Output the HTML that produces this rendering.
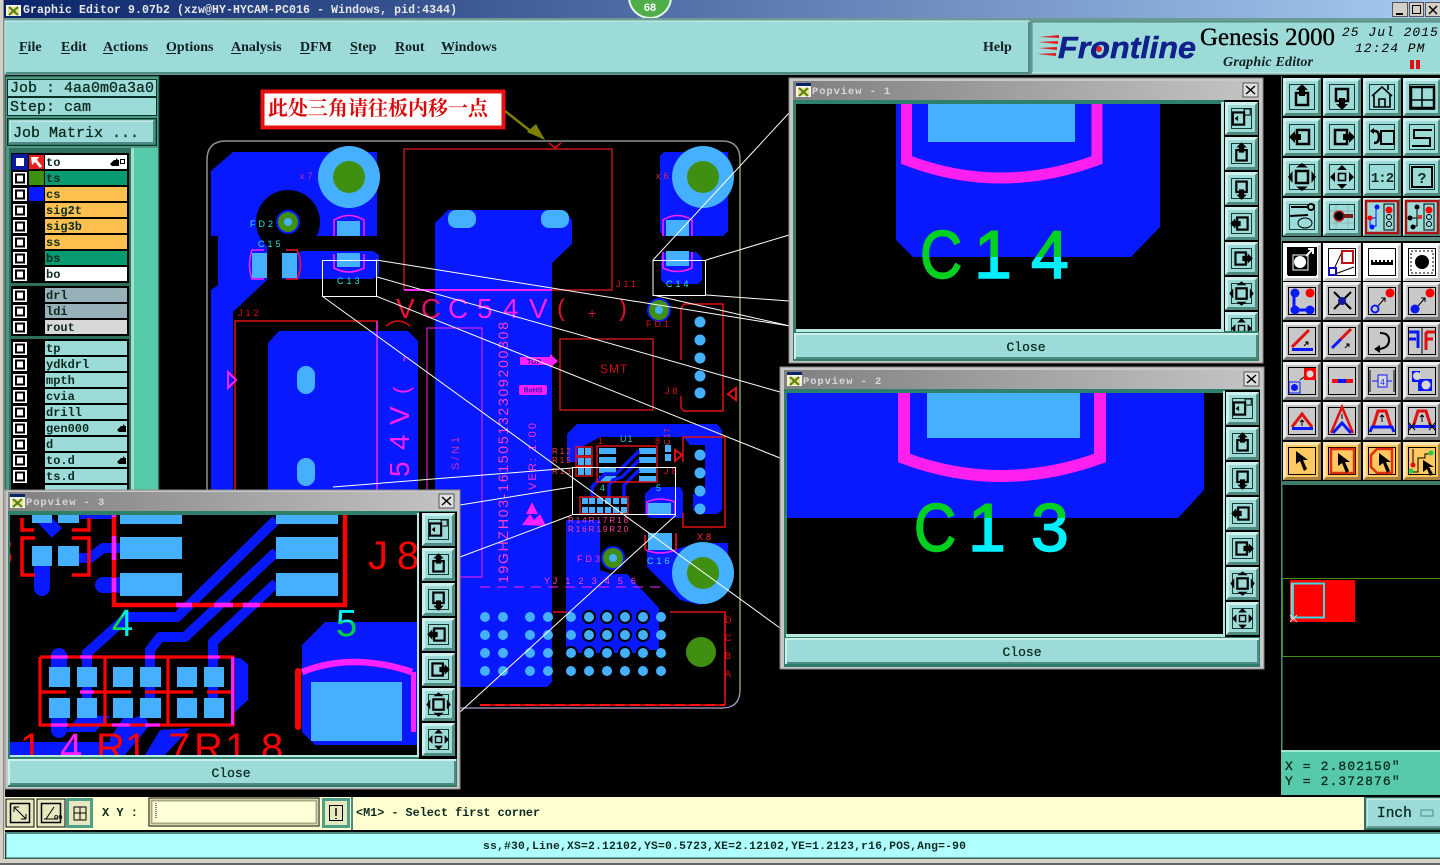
<!DOCTYPE html>
<html><head><meta charset="utf-8"><title>Graphic Editor</title>
<style>
html,body{margin:0;padding:0;background:#000;overflow:hidden}
svg{display:block}
text{white-space:pre}
.m{font-family:"Liberation Mono",monospace;font-weight:bold}
.mr{font-family:"Liberation Mono",monospace;font-weight:normal;fill:#0a2a20;stroke:#0a2a20;stroke-width:.3px}
.s{font-family:"Liberation Sans",sans-serif}
.sf{font-family:"Liberation Serif",serif}
.mn{font-family:"Liberation Serif",serif;font-weight:bold;font-size:14px;fill:#102020}
.ly{font-family:"Liberation Mono",monospace;font-weight:bold;font-size:12px;fill:#0a2a20}
</style></head><body>
<svg xmlns="http://www.w3.org/2000/svg" width="1440" height="865" viewBox="0 0 1440 865">
<defs>
<linearGradient id="tg" x1="0" x2="1"><stop offset="0" stop-color="#0a246a"/><stop offset="1" stop-color="#a6caf0"/></linearGradient>
<linearGradient id="pg" x1="0" x2="1"><stop offset="0" stop-color="#808080"/><stop offset="1" stop-color="#c4c4c4"/></linearGradient>
<linearGradient id="c14" gradientUnits="userSpaceOnUse" x1="0" x2="0" y1="225" y2="285"><stop offset=".533" stop-color="#00d020"/><stop offset=".533" stop-color="#00f0ff"/></linearGradient>
<linearGradient id="c13" gradientUnits="userSpaceOnUse" x1="0" x2="0" y1="498" y2="558"><stop offset=".333" stop-color="#00d020"/><stop offset=".333" stop-color="#00f0ff"/></linearGradient>
<linearGradient id="c5" gradientUnits="userSpaceOnUse" x1="0" x2="0" y1="600" y2="640"><stop offset=".55" stop-color="#00f0ff"/><stop offset=".55" stop-color="#00d040"/></linearGradient>
<linearGradient id="c4" x1="0" x2="1" y1="0" y2="0"><stop offset=".45" stop-color="#00e040"/><stop offset=".5" stop-color="#00f0e0"/></linearGradient>
<clipPath id="cp1"><rect x="796" y="104" width="425" height="225"/></clipPath>
<clipPath id="cp2"><rect x="787" y="393" width="436" height="241"/></clipPath>
<clipPath id="cp3"><rect x="10" y="515" width="407" height="240"/></clipPath>
<clipPath id="cb1"><rect x="1224" y="100" width="36" height="231"/></clipPath>

<g id="tb"><rect width="38" height="38" fill="#9ddbd9"/><path d="M0 0H38L35 3H3V35L0 38Z" fill="#cdf0ec"/><path d="M38 38H0L3 35H35V3L38 0Z" fill="#4f8a80"/><rect x="6.5" y="6.5" width="25" height="25" fill="none" stroke="#1a3a34"/></g>
<g id="wb"><rect width="38" height="38" fill="#fff"/><path d="M38 38H0L3 35H35V3L38 0Z" fill="#c8c8c8"/><rect x="5.5" y="5.5" width="27" height="27" fill="none" stroke="#000"/></g>
<g id="gb"><rect width="38" height="38" fill="#c8c8c8"/><path d="M0 0H38L35 3H3V35L0 38Z" fill="#eee"/><path d="M38 38H0L3 35H35V3L38 0Z" fill="#777"/><rect x="5.5" y="5.5" width="27" height="27" fill="none" stroke="#000"/></g>
<g id="yb"><rect width="38" height="38" fill="#ffc860"/><path d="M0 0H38L35 3H3V35L0 38Z" fill="#ffe6b0"/><path d="M38 38H0L3 35H35V3L38 0Z" fill="#a88240"/><rect x="5.5" y="5.5" width="27" height="27" fill="none" stroke="#000"/></g>
<g id="sb"><rect width="33" height="33" fill="#9ddbd9"/><path d="M0 0H33L30 3H3V30L0 33Z" fill="#cdf0ec"/><path d="M33 33H0L3 30H30V3L33 0Z" fill="#4f8a80"/><rect x="6.5" y="6.5" width="20" height="20" fill="none" stroke="#1a3a34"/></g>

<g id="iu"><rect x="13" y="15" width="12" height="12" fill="none" stroke="#000" stroke-width="2.5"/><path d="M19 6 25 12H22V18H16V12H13Z"/></g>
<g id="id"><rect x="13" y="11" width="12" height="12" fill="none" stroke="#000" stroke-width="2.5"/><path d="M19 32 25 26H22V20H16V26H13Z"/></g>
<g id="il"><rect x="14" y="12" width="12" height="14" fill="none" stroke="#000" stroke-width="2.5"/><path d="M6 19 12 13V16H18V22H12V25Z"/></g>
<g id="ir"><rect x="12" y="12" width="12" height="14" fill="none" stroke="#000" stroke-width="2.5"/><path d="M32 19 26 13V16H20V22H26V25Z"/></g>
<g id="if"><rect x="13" y="13" width="12" height="12" fill="none" stroke="#000" stroke-width="2.5"/><path d="M19 5 25 9.5H13ZM19 33 25 28.5H13ZM5 19 9.5 13V25ZM33 19 28.5 13V25Z"/></g>
<g id="ip"><rect x="15.5" y="15.5" width="7" height="7" fill="none" stroke="#000" stroke-width="1.6"/><path d="M19 7 24 12H14ZM19 31 24 26H14ZM7 19 12 14V24ZM31 19 26 14V24Z"/></g>
<g id="iz"><rect x="9" y="12" width="13" height="14" fill="none" stroke="#000" stroke-width="2.5"/><rect x="22" y="8" width="7" height="7" fill="none" stroke="#000" stroke-width="1.2"/><path d="M11 19 15 16V22Z"/></g>

<g id="cb"><rect width="14" height="13" fill="#fff"/><rect x="3" y="2.5" width="8" height="8" fill="#fff" stroke="#000" stroke-width="2"/></g>
<g id="ti"><rect width="15" height="14" fill="#f4f4e8"/><rect width="15" height="3" fill="#0a246a"/><rect x="2" y="5" width="11" height="8" fill="#f0e080"/><path d="M3 5 12 13M12 5 3 13" stroke="#508020" stroke-width="2"/></g>
<g id="hand"><path d="M0 6 4 2H6V0L8 2H9V8H2Z"/></g>
</defs>

<!-- base -->
<rect width="1440" height="865" fill="#000"/>
<rect x="0" width="5" height="865" fill="#d4d0c8"/>
<rect x="3" width="1" height="865" fill="#888"/>

<!-- title bar -->
<rect x="4" y="0" width="1436" height="18" fill="url(#tg)"/>
<use href="#ti" x="6" y="2"/>
<text class="m" x="23" y="13" font-size="11.5" fill="#e8e8e8" textLength="434">Graphic Editor 9.07b2 (xzw@HY-HYCAM-PC016 - Windows, pid:4344)</text>
<circle cx="650" cy="-3" r="21" fill="#4fae4a" stroke="#e8f4e8" stroke-width="2"/>
<text class="s" x="650" y="11" font-size="11" font-weight="bold" fill="#fff" text-anchor="middle">68</text>
<g fill="#d4d0c8" stroke="#555">
<rect x="1392.5" y="2.5" width="15" height="14"/><rect x="1409.5" y="2.5" width="14" height="14"/><rect x="1425.5" y="2.5" width="15" height="14"/></g>
<path d="M1396 13h7v2h-7z"/><rect x="1412.5" y="5.5" width="8" height="8" fill="none" stroke="#000"/><path d="M1429 6 1437 14M1437 6 1429 14" stroke="#000" stroke-width="1.5"/>

<!-- menu bar -->
<rect x="4" y="18" width="1436" height="57" fill="#6a9a92"/>
<rect x="5" y="21" width="1024" height="52" fill="#9ddbd9" stroke="#cdf0ec" stroke-width="1"/>
<path d="M6 73H1029V22" fill="none" stroke="#4f8a80" stroke-width="2"/>
<g>
<text class="mn" x="19" y="51">File</text><text class="mn" x="61" y="51">Edit</text><text class="mn" x="103" y="51">Actions</text><text class="mn" x="166" y="51">Options</text><text class="mn" x="231" y="51">Analysis</text><text class="mn" x="300" y="51">DFM</text><text class="mn" x="350" y="51">Step</text><text class="mn" x="395" y="51">Rout</text><text class="mn" x="441" y="51">Windows</text><text class="mn" x="983" y="51">Help</text>
</g>
<g fill="#102020"><rect x="19" y="53" width="9" height="1"/><rect x="61" y="53" width="9" height="1"/><rect x="103" y="53" width="10" height="1"/><rect x="166" y="53" width="10" height="1"/><rect x="231" y="53" width="10" height="1"/><rect x="300" y="53" width="10" height="1"/><rect x="350" y="53" width="8" height="1"/><rect x="395" y="53" width="9" height="1"/><rect x="441" y="53" width="13" height="1"/></g>

<!-- logo panel -->
<rect x="1032" y="22" width="408" height="51" fill="#9ddbd9"/>
<path d="M1032 73V22H1440" fill="none" stroke="#4f8a80"/><path d="M1032 73H1440" stroke="#cdf0ec"/>
<g fill="#e02020"><path d="M1039 37 1059 35V38ZM1038 42 1058 41V44ZM1038 48 1057 47V50ZM1037 54 1056 53V56Z"/></g>
<text class="s" x="1058" y="58" font-size="31" font-weight="bold" font-style="italic" fill="#10208c" stroke="#10208c" stroke-width=".5" textLength="138" lengthAdjust="spacingAndGlyphs">Frontline</text>
<circle cx="1099" cy="49" r="3" fill="#e02020"/>
<text class="sf" x="1200" y="45" font-size="25" fill="#000" stroke="#000" stroke-width=".35" textLength="135" lengthAdjust="spacingAndGlyphs">Genesis 2000</text>
<text class="sf" x="1223" y="66" font-size="14" font-weight="bold" font-style="italic" fill="#102020" textLength="90">Graphic Editor</text>
<text x="1342" y="36" font-family="Liberation Mono" font-style="italic" font-size="13" fill="#000" letter-spacing="1">25 Jul 2015</text>
<text x="1355" y="52" font-family="Liberation Mono" font-style="italic" font-size="13" fill="#000" letter-spacing="1">12:24 PM</text>
<rect x="1410" y="60" width="4" height="9" fill="#e01010"/><rect x="1416" y="60" width="4" height="9" fill="#e01010"/>

<!-- ================ PCB ================ -->
<g>
<!-- blue copper -->
<g fill="#0818ff">
<path d="M211 171 233 152H377V236H211Z"/>
<path d="M218 232H267V280L233 312V600H211V290L218 285Z"/>
<rect x="211" y="171" width="7" height="51"/>
<path d="M282 251H373L379 255V275L373 279H282Z"/>
<path d="M268 343 279 331H408L418 341V500H268Z"/>
<path d="M435 223 448 210H563L572 220V244L552 263V682L547 687H435Z"/>
<path d="M660 156 664 152H728V231L723 236H664L660 232Z"/>
<path d="M661 256 665 252H696L702 258V280L698 284H665L661 280Z"/>
<path d="M567 434 577 424H717L722 430V510L717 514H700L693 510V494H705V445H690L683 437H600L582 447V462H567Z"/>
<path d="M566 520H600V570L612 574H627L659 608V650H650L640 653H566Z"/>
<path d="M645 494 652 487H680L683 492V518H650L645 514Z"/>
<path d="M647 550 672 550 700 543H728L728 580 700 605 680 600 647 567Z"/>
</g>
<!-- cutouts -->
<circle cx="288" cy="222" r="32" fill="#000"/>
<rect x="320" y="236" width="60" height="15" fill="#000"/>
<rect x="282" y="240" width="40" height="11" fill="#000"/>
<rect x="267" y="250" width="15" height="34" fill="#000"/>
<!-- circles -->
<circle cx="349" cy="177" r="31" fill="#44b0ff"/><circle cx="349" cy="177" r="16" fill="#3f9010"/>
<circle cx="703" cy="177" r="31" fill="#44b0ff"/><circle cx="703" cy="177" r="16" fill="#3f9010"/>
<circle cx="703" cy="573" r="31" fill="#44b0ff"/><circle cx="703" cy="573" r="16" fill="#3f9010"/>
<circle cx="701" cy="652" r="15" fill="#3f9010"/>
<g><circle cx="288" cy="222" r="12" fill="#0818ff"/><circle cx="288" cy="222" r="10" fill="#3f9010"/><circle cx="288" cy="222" r="4" fill="#44b0ff"/>
<circle cx="659" cy="310" r="12" fill="#0818ff"/><circle cx="659" cy="310" r="10" fill="#3f9010"/><circle cx="659" cy="310" r="4" fill="#44b0ff"/>
<circle cx="613" cy="558" r="12" fill="#0818ff"/><circle cx="613" cy="558" r="10" fill="#3f9010"/><circle cx="613" cy="558" r="4" fill="#44b0ff"/></g>
<!-- light pads -->
<g fill="#44b0ff">
<rect x="448" y="210" width="28" height="18" rx="8"/><rect x="541" y="210" width="28" height="18" rx="8"/>
<rect x="297" y="366" width="18" height="28" rx="9"/><rect x="297" y="458" width="18" height="28" rx="9"/>
<rect x="337" y="221" width="23" height="15"/><rect x="337" y="253" width="23" height="14"/>
<rect x="252" y="253" width="15" height="25"/><rect x="282" y="253" width="15" height="25"/>
<rect x="666" y="220" width="23" height="16"/><rect x="666" y="251" width="23" height="15"/>
<rect x="648" y="503" width="23" height="12"/><rect x="648" y="533" width="24" height="17"/>
</g>
<!-- pad grid -->
<g fill="#000"><circle cx="589" cy="617" r="7"/><circle cx="607" cy="617" r="7"/><circle cx="625" cy="617" r="7"/><circle cx="643" cy="617" r="7"/><circle cx="589" cy="635" r="7"/><circle cx="607" cy="635" r="7"/><circle cx="625" cy="635" r="7"/><circle cx="643" cy="635" r="7"/><circle cx="571" cy="653" r="7"/><circle cx="589" cy="653" r="7"/><circle cx="607" cy="653" r="7"/><circle cx="625" cy="653" r="7"/><circle cx="643" cy="653" r="7"/></g>
<g fill="#44b0ff">
<circle cx="485" cy="617" r="5"/><circle cx="503" cy="617" r="5"/><circle cx="530" cy="617" r="5"/><circle cx="548" cy="617" r="5"/><circle cx="571" cy="617" r="5"/><circle cx="589" cy="617" r="5"/><circle cx="607" cy="617" r="5"/><circle cx="625" cy="617" r="5"/><circle cx="643" cy="617" r="5"/><circle cx="661" cy="617" r="5"/>
<circle cx="485" cy="635" r="5"/><circle cx="503" cy="635" r="5"/><circle cx="530" cy="635" r="5"/><circle cx="548" cy="635" r="5"/><circle cx="571" cy="635" r="5"/><circle cx="589" cy="635" r="5"/><circle cx="607" cy="635" r="5"/><circle cx="625" cy="635" r="5"/><circle cx="643" cy="635" r="5"/><circle cx="661" cy="635" r="5"/>
<circle cx="485" cy="653" r="5"/><circle cx="503" cy="653" r="5"/><circle cx="530" cy="653" r="5"/><circle cx="548" cy="653" r="5"/><circle cx="571" cy="653" r="5"/><circle cx="589" cy="653" r="5"/><circle cx="607" cy="653" r="5"/><circle cx="625" cy="653" r="5"/><circle cx="643" cy="653" r="5"/><circle cx="661" cy="653" r="5"/>
<circle cx="485" cy="671" r="5"/><circle cx="503" cy="671" r="5"/><circle cx="530" cy="671" r="5"/><circle cx="548" cy="671" r="5"/><circle cx="571" cy="671" r="5"/><circle cx="589" cy="671" r="5"/><circle cx="607" cy="671" r="5"/><circle cx="625" cy="671" r="5"/><circle cx="643" cy="671" r="5"/><circle cx="661" cy="671" r="5"/>
<circle cx="700" cy="322" r="5.5"/><circle cx="700" cy="340" r="5.5"/><circle cx="700" cy="358" r="5.5"/><circle cx="700" cy="376" r="5.5"/><circle cx="700" cy="393" r="5.5"/>
<circle cx="700" cy="455" r="5.5"/><circle cx="700" cy="473" r="5.5"/><circle cx="700" cy="491" r="5.5"/><circle cx="700" cy="509" r="5.5"/>
<!-- U1 pads -->
<rect x="599" y="448" width="17" height="6"/><rect x="599" y="457" width="17" height="6"/><rect x="599" y="467" width="17" height="6"/><rect x="599" y="476" width="17" height="6"/>
<rect x="639" y="448" width="17" height="6"/><rect x="639" y="457" width="17" height="6"/><rect x="639" y="467" width="17" height="6"/><rect x="639" y="476" width="17" height="6"/>
<rect x="578" y="448" width="6" height="7"/><rect x="585" y="448" width="6" height="7"/><rect x="578" y="458" width="6" height="7"/><rect x="585" y="458" width="6" height="7"/><rect x="578" y="468" width="6" height="7"/><rect x="585" y="468" width="6" height="7"/>
<rect x="582" y="498" width="6" height="6"/><rect x="589" y="498" width="6" height="6"/><rect x="597" y="498" width="6" height="6"/><rect x="605" y="498" width="6" height="6"/><rect x="613" y="498" width="6" height="6"/><rect x="621" y="498" width="6" height="6"/>
<rect x="582" y="507" width="6" height="6"/><rect x="589" y="507" width="6" height="6"/><rect x="597" y="507" width="6" height="6"/><rect x="605" y="507" width="6" height="6"/><rect x="613" y="507" width="6" height="6"/><rect x="621" y="507" width="6" height="6"/>
<rect x="665" y="445" width="6" height="7"/><rect x="665" y="454" width="6" height="7"/>
</g>
<!-- traces under U1 -->
<g fill="none" stroke="#0818ff" stroke-width="3.5"><path d="M639 451 616 474 605 474 592 487V498M639 460 622 477 613 480 609 485V498M639 470 624 485V498"/></g>
<!-- outlines red -->
<g fill="none" stroke="#e01010" stroke-width="1.5">
<path d="M404 290V149H612V290H552" stroke="#c01818"/>
<rect x="560" y="339" width="93" height="71" stroke="#c01818"/>
<path d="M235 490V321H377V330"/>
<path d="M681 360V308L684 304H723V411H684L681 408V396"/>
<path d="M683 462V437H725V527H683V513"/>
<rect x="597" y="446" width="60" height="36"/>
<rect x="576" y="447" width="16" height="9"/><rect x="576" y="457" width="16" height="9"/><rect x="576" y="467" width="16" height="9"/>
<rect x="580" y="497" width="48" height="17"/>
<path d="M553 612H567M670 612H725V705H480" />
</g>
<path d="M480 705H725" stroke="#ff1010" stroke-width="2" stroke-dasharray="10 5" fill="none"/>
<path d="M725 612V698" stroke="#e01010" stroke-width="1.5"/>
<path d="M404 290H552" stroke="#ff20ff" stroke-width="2"/>
<path d="M377 321V490" stroke="#ff20ff" stroke-width="1.5"/>
<rect x="427" y="328" width="55" height="249" fill="none" stroke="#ff20ff" stroke-width="1"/>
<path d="M480 587H660" stroke="#ff20ff" stroke-dasharray="10 7" stroke-width="1"/>
<!-- magenta arcs -->
<g fill="none" stroke="#ff20ff" stroke-width="1.6">
<path d="M334 236V220Q349 211 364 220V236"/><path d="M334 254V268Q349 276 364 268V254"/>
<path d="M663 236V220Q677 211 692 220V236"/><path d="M663 252V268Q677 275 692 268V252"/>
<path d="M264 250H252Q247 265 252 279H264" />
<path d="M647 515V502Q660 496 675 502V515"/><path d="M646 550Q660 556 675 550"/>
</g>
<g fill="none" stroke="#f01030" stroke-width="1.6"><path d="M286 250H297Q304 265 297 279H286"/><path d="M645 535V550M676 533V550"/></g>
<!-- small triangles etc -->
<path d="M228 372 236 380 228 388Z" fill="none" stroke="#ff20ff" stroke-width="2"/>
<path d="M736 388 728 394 736 400Z" fill="none" stroke="#e01010" stroke-width="2"/>
<path d="M675 450 682 455 675 461Z" fill="none" stroke="#e01010" stroke-width="2"/>
<path d="M549 143 555 148 561 143" stroke="#e01010" stroke-width="1.5" fill="none"/>
<path d="M386 326Q398 316 410 326" fill="none" stroke="#e01010" stroke-width="1.5"/>
<path d="M520 361H550V354L558 361 550 368V361Z" fill="#ff20ff"/><rect x="520" y="357" width="30" height="8" fill="#ff20ff"/>
<rect x="519" y="385" width="28" height="10" rx="2" fill="#ff20ff"/>
<text class="s" x="533" y="392.5" font-size="7" text-anchor="middle" fill="#3010b0" font-weight="bold">RoHS</text>
<text class="s" x="527" y="364" font-size="7" fill="#3010b0" font-weight="bold">TOP</text>
<path d="M532 502 538 514H526ZM522 525 530 514 534 520 540 514 546 526Z" fill="#ff20ff"/>
<!-- silk text -->
<g class="s" font-size="28">
<text x="396" y="318" fill="#e81030">V</text>
<text x="421" y="318" fill="#e01070">C</text>
<text x="448" y="318" fill="#ff20ff">C</text>
<text x="477" y="318" fill="#ff20ff">5</text>
<text x="503" y="318" fill="#ff20ff">4</text>
<text x="529" y="318" fill="#ff20ff">V</text>
<text x="557" y="316" fill="#e01030" font-size="24">(</text>
<text x="588" y="318" fill="#e01030" font-size="14">+</text>
<text x="619" y="316" fill="#e01030" font-size="24">)</text>
</g>
<g class="s" font-size="28" fill="#ff20ff">
<text transform="translate(409,477) rotate(-90)">5</text>
<text transform="translate(409,450) rotate(-90)">4</text>
<text transform="translate(409,425) rotate(-90)">V</text>
<text transform="translate(409,394) rotate(-90)" font-size="22">(</text>
<text transform="translate(409,362) rotate(-90)" font-size="18">-</text>
</g>
<text class="s" transform="translate(508,583) rotate(-90)" font-size="14" fill="#ff40d0" textLength="261">19GHZH03-161505132309200308</text>
<text class="s" transform="translate(536,490) rotate(-90)" font-size="11" fill="#ff30e0" textLength="67">VER: 1.00</text>
<text class="s" transform="translate(459,470) rotate(-90)" font-size="11" fill="#c030c0" textLength="33">S/N1</text>
<g class="s" font-size="9" letter-spacing="3">
<text x="250" y="227" fill="#30e0e0">FD2</text><text x="258" y="247" fill="#30e0e0">C15</text>
<text x="337" y="284" fill="#30e0e0">C13</text><text x="666" y="287" fill="#30e0e0">C14</text>
<text x="300" y="179" fill="#c030c0">x7</text><text x="656" y="179" fill="#d03050">x6</text>
<text x="238" y="316" fill="#e01010">J12</text><text x="616" y="287" fill="#e01010">J11</text>
<text x="577" y="562" fill="#ff30e0">FD3</text><text x="646" y="327" fill="#e01010">FD1</text>
<text x="647" y="564" fill="#30e0e0">C16</text><text x="697" y="540" fill="#ff3030">X8</text>
<text x="665" y="394" fill="#e01010">J8</text><text x="664" y="474" fill="#e01010">J8</text>
<text x="600" y="373" fill="#d01010" font-size="12" letter-spacing="1">SMT</text>
<text x="620" y="442" fill="#30c0e0" letter-spacing="1">U1</text><text x="598" y="444" fill="#e01010">1</text><text x="655" y="444" fill="#e01010">8</text>
<text x="600" y="491" fill="#30e0a0">4</text><text x="656" y="491" fill="#30e0e0">5</text>
<text x="552" y="454" fill="#ff4040" font-size="8" letter-spacing="2">R12</text><text x="552" y="463" fill="#ff4040" font-size="8" letter-spacing="2">R15</text><text x="552" y="474" fill="#ff4040" font-size="8" letter-spacing="2">R13</text>
<text x="568" y="523" fill="#ff40a0" font-size="8" letter-spacing="2">R14R17R18</text><text x="568" y="532" fill="#ff40a0" font-size="8" letter-spacing="2">R16R19R20</text>
<text x="544" y="584" fill="#ff40d0" letter-spacing="2.8">YJ 1 2 3 4 5 6</text>
<text x="725" y="623" fill="#e01010" font-size="9">D</text><text x="725" y="641" fill="#e01010" font-size="9">C</text><text x="725" y="659" fill="#e01010" font-size="9">B</text><text x="725" y="677" fill="#e01010" font-size="9">A</text>
<text transform="translate(670,445) rotate(-90)" fill="#e03040" font-size="8" letter-spacing="1">C17</text>
</g>
<!-- board outline -->
<path d="M207 160Q207 141 226 141H722Q740 141 740 160" fill="none" stroke="#909090" stroke-width="1.5"/>
<path d="M207 160V490" stroke="#909090" stroke-width="1.5"/>
<path d="M740 160V690" stroke="#c8f0a0" stroke-width="1"/>
<path d="M460 708H722Q740 708 740 690" fill="none" stroke="#b0a0d0" stroke-width="1.2"/>
<!-- callout -->
<rect x="262.5" y="91.5" width="241" height="36" fill="#fff" stroke="#e81010" stroke-width="4"/>
<text x="268" y="115" font-family="'Liberation Serif','Noto Serif CJK SC',serif" font-weight="bold" font-size="20" fill="#d80a0a" textLength="220">此处三角请往板内移一点</text>
<path d="M505 111 533 133" stroke="#808000" stroke-width="2.5"/>
<path d="M527 132 536 124 545 140Z" fill="#808000"/>
<!-- white zoom boxes -->
<g fill="none" stroke="#fff" stroke-width="1">
<rect x="322.5" y="260.5" width="54" height="36"/>
<rect x="653" y="260.5" width="52.5" height="35"/>
<rect x="572.5" y="467.5" width="103" height="47"/>
<path d="M376 260 790 326M377 277 780 392M376 296 780 458M322 296 780 628"/>
<path d="M706 260 789 235M653 260 789 113M706 295 789 301M653 295 790 326"/>
<path d="M572 468 333 487M572 487 460 505M572 515 460 557M676 515 460 712"/>
</g>
</g>

<!-- ================ LEFT PANEL ================ -->
<rect x="5" y="76" width="154" height="414" fill="#4a9a84" stroke="#143a30"/>
<rect x="7.5" y="79.5" width="149" height="17" fill="#9ddbd9" stroke="#0a3028"/>
<rect x="7.5" y="97.5" width="149" height="18" fill="#9ddbd9" stroke="#0a3028"/>
<text class="mr" x="10" y="92" font-size="15">Job : 4aa0m0a3a0</text>
<text class="mr" x="10" y="111" font-size="15">Step: cam</text>
<rect x="7.5" y="118.5" width="149" height="27" fill="#2f7f6a" stroke="#0a3028"/>
<rect x="10" y="121" width="144" height="22" fill="#9ddbd9"/>
<path d="M10 143V121H154" fill="none" stroke="#cdf0ec" stroke-width="1.5"/><path d="M10 143H154V121" fill="none" stroke="#4f8a80" stroke-width="2"/>
<text class="mr" x="13" y="137" font-size="15">Job Matrix ...</text>
<rect x="9" y="148" width="122" height="342" fill="#2f6f5c"/>
<rect x="131" y="148" width="3" height="342" fill="#a0e0d0"/>
<rect x="134" y="148" width="24" height="342" fill="#56c9aa"/>
<rect x="11" y="153" width="118" height="130" fill="#000"/>
<rect x="11" y="286" width="118" height="50" fill="#000"/>
<rect x="11" y="339" width="118" height="151" fill="#000"/>
<!-- rows -->
<g>
<rect x="45" y="155" width="82" height="14" fill="#fff"/><rect x="45" y="171" width="82" height="14" fill="#089a70"/><rect x="45" y="187" width="82" height="14" fill="#ffc050"/><rect x="45" y="203" width="82" height="14" fill="#ffc050"/><rect x="45" y="219" width="82" height="14" fill="#ffc050"/><rect x="45" y="235" width="82" height="14" fill="#ffc050"/><rect x="45" y="251" width="82" height="14" fill="#089a70"/><rect x="45" y="267" width="82" height="14" fill="#fff"/>
<rect x="45" y="288" width="82" height="14" fill="#98b0b8"/><rect x="45" y="304" width="82" height="14" fill="#98b0b8"/><rect x="45" y="320" width="82" height="14" fill="#d8d8d8"/>
<rect x="45" y="341" width="82" height="14" fill="#9ddbd9"/><rect x="45" y="357" width="82" height="14" fill="#9ddbd9"/><rect x="45" y="373" width="82" height="14" fill="#9ddbd9"/><rect x="45" y="389" width="82" height="14" fill="#9ddbd9"/><rect x="45" y="405" width="82" height="14" fill="#9ddbd9"/><rect x="45" y="421" width="82" height="14" fill="#9ddbd9"/><rect x="45" y="437" width="82" height="14" fill="#9ddbd9"/><rect x="45" y="453" width="82" height="14" fill="#9ddbd9"/><rect x="45" y="469" width="82" height="14" fill="#9ddbd9"/><rect x="45" y="485" width="82" height="5" fill="#9ddbd9"/>
</g>
<g>
<rect x="12" y="154" width="16" height="16" fill="#0a1a9a"/><rect x="16" y="158" width="8" height="8" fill="#fff"/>
<use href="#cb" x="13" y="172"/><use href="#cb" x="13" y="188"/><use href="#cb" x="13" y="204"/><use href="#cb" x="13" y="220"/><use href="#cb" x="13" y="236"/><use href="#cb" x="13" y="252"/><use href="#cb" x="13" y="268"/>
<use href="#cb" x="13" y="289"/><use href="#cb" x="13" y="305"/><use href="#cb" x="13" y="321"/>
<use href="#cb" x="13" y="342"/><use href="#cb" x="13" y="358"/><use href="#cb" x="13" y="374"/><use href="#cb" x="13" y="390"/><use href="#cb" x="13" y="406"/><use href="#cb" x="13" y="422"/><use href="#cb" x="13" y="438"/><use href="#cb" x="13" y="454"/><use href="#cb" x="13" y="470"/>
</g>
<rect x="29" y="155" width="15" height="14" fill="#e82020"/><path d="M31 157H39L37 160 42 166 40 168 35 162 32 165Z" fill="#fff"/>
<rect x="29" y="171" width="15" height="14" fill="#3f9010"/><rect x="29" y="187" width="15" height="14" fill="#0818ff"/>
<g>
<text class="ly" x="46" y="166">to</text><text class="ly" x="46" y="182">ts</text><text class="ly" x="46" y="198">cs</text><text class="ly" x="46" y="214">sig2t</text><text class="ly" x="46" y="230">sig3b</text><text class="ly" x="46" y="246">ss</text><text class="ly" x="46" y="262">bs</text><text class="ly" x="46" y="278">bo</text>
<text class="ly" x="46" y="299">drl</text><text class="ly" x="46" y="315">ldi</text><text class="ly" x="46" y="331">rout</text>
<text class="ly" x="46" y="352">tp</text><text class="ly" x="46" y="368">ydkdrl</text><text class="ly" x="46" y="384">mpth</text><text class="ly" x="46" y="400">cvia</text><text class="ly" x="46" y="416">drill</text><text class="ly" x="46" y="432">gen000</text><text class="ly" x="46" y="448">d</text><text class="ly" x="46" y="464">to.d</text><text class="ly" x="46" y="480">ts.d</text>
</g>
<use href="#hand" x="110" y="158"/><rect x="120.5" y="159.5" width="4" height="4" fill="none" stroke="#000"/>
<use href="#hand" x="117" y="424"/><use href="#hand" x="117" y="456"/>

<!-- ================ POPVIEW 1 ================ -->
<g>
<rect x="789" y="78" width="474" height="285" fill="#c8c8c8" stroke="#888"/>
<rect x="793" y="81" width="466" height="19" fill="url(#pg)"/>
<use href="#ti" x="796" y="83"/>
<text class="m" x="812" y="94" font-size="10.5" fill="#d8d8d8" letter-spacing=".9">Popview - 1</text>
<rect x="1243" y="83" width="15" height="14" fill="#e0e0e0" stroke="#555"/><path d="M1246 86 1255 94M1255 86 1246 94" stroke="#000" stroke-width="1.5"/>
<rect x="793" y="100" width="466" height="261" fill="#2f7f6a"/>
<rect x="796" y="104" width="425" height="225" fill="#000"/>
<rect x="796" y="329" width="428" height="3" fill="#b8e8e2"/><rect x="1221" y="102" width="3" height="230" fill="#b8e8e2"/>
<g clip-path="url(#cp1)">
<path d="M896 104H1160V227L1131 257H913L896 240Z" fill="#0818ff"/>
<rect x="928" y="104" width="147" height="38" fill="#44b0ff"/>
<path d="M906.5 100V160Q1000 196 1097 160V100" fill="none" stroke="#ff20f0" stroke-width="11"/>
<g class="s">
<text transform="translate(920,278) scale(.86,1)" font-size="68" fill="url(#c14)" stroke="url(#c14)" stroke-width="1.5">C</text>
<text x="974" y="278" font-size="68" fill="url(#c14)" stroke="url(#c14)" stroke-width="1.5">1</text>
<text x="1031" y="278" font-size="68" fill="url(#c14)" stroke="url(#c14)" stroke-width="1.5">4</text>
</g>
</g>
<g clip-path="url(#cb1)">
<rect x="1224" y="100" width="35" height="233" fill="#000"/>
<g transform="translate(1225,102)"><use href="#sb"/><use href="#iz" transform="scale(.87)"/></g>
<g transform="translate(1225,137)"><use href="#sb"/><use href="#iu" transform="scale(.87)"/></g>
<g transform="translate(1225,172)"><use href="#sb"/><use href="#id" transform="scale(.87)"/></g>
<g transform="translate(1225,207)"><use href="#sb"/><use href="#il" transform="scale(.87)"/></g>
<g transform="translate(1225,242)"><use href="#sb"/><use href="#ir" transform="scale(.87)"/></g>
<g transform="translate(1225,277)"><use href="#sb"/><use href="#if" transform="scale(.87)"/></g>
<g transform="translate(1225,312)"><use href="#sb"/><use href="#ip" transform="scale(.87)"/></g>
</g>
<rect x="795" y="334" width="463" height="25" fill="#9ddbd9"/>
<path d="M795 359V334H1258" fill="none" stroke="#cdf0ec" stroke-width="2"/><path d="M796 358H1257V335" fill="none" stroke="#4f8a80" stroke-width="2"/>
<text class="mr" x="1026" y="351" font-size="13" text-anchor="middle">Close</text>
</g>

<!-- ================ POPVIEW 2 ================ -->
<g>
<rect x="780" y="367" width="484" height="302" fill="#c8c8c8" stroke="#888"/>
<rect x="784" y="370" width="476" height="19" fill="url(#pg)"/>
<use href="#ti" x="787" y="372"/>
<text class="m" x="803" y="384" font-size="10.5" fill="#d8d8d8" letter-spacing=".9">Popview - 2</text>
<rect x="1244" y="372" width="15" height="14" fill="#e0e0e0" stroke="#555"/><path d="M1247 375 1256 383M1256 375 1247 383" stroke="#000" stroke-width="1.5"/>
<rect x="784" y="389" width="476" height="278" fill="#2f7f6a"/>
<rect x="787" y="393" width="436" height="241" fill="#000"/>
<rect x="786" y="634" width="440" height="3" fill="#b8e8e2"/><rect x="1223" y="391" width="3" height="246" fill="#b8e8e2"/>
<g clip-path="url(#cp2)">
<path d="M787 393H1204V490L1178 518H787Z" fill="#0818ff"/>
<rect x="927" y="393" width="153" height="45" fill="#44b0ff"/>
<path d="M904 390V458Q1000 494 1100 458V390" fill="none" stroke="#ff20f0" stroke-width="12"/>
<g class="s">
<text transform="translate(914,551) scale(.86,1)" font-size="68" fill="url(#c13)" stroke="url(#c13)" stroke-width="1.5">C</text>
<text x="968" y="551" font-size="68" fill="url(#c13)" stroke="url(#c13)" stroke-width="1.5">1</text>
<text x="1031" y="551" font-size="68" fill="url(#c13)" stroke="url(#c13)" stroke-width="1.5">3</text>
</g>
</g>
<rect x="1225" y="390" width="35" height="247" fill="#000"/>
<g transform="translate(1226,392)"><use href="#sb"/><use href="#iz" transform="scale(.87)"/></g>
<g transform="translate(1226,427)"><use href="#sb"/><use href="#iu" transform="scale(.87)"/></g>
<g transform="translate(1226,462)"><use href="#sb"/><use href="#id" transform="scale(.87)"/></g>
<g transform="translate(1226,497)"><use href="#sb"/><use href="#il" transform="scale(.87)"/></g>
<g transform="translate(1226,532)"><use href="#sb"/><use href="#ir" transform="scale(.87)"/></g>
<g transform="translate(1226,567)"><use href="#sb"/><use href="#if" transform="scale(.87)"/></g>
<g transform="translate(1226,602)"><use href="#sb"/><use href="#ip" transform="scale(.87)"/></g>
<rect x="786" y="639" width="473" height="25" fill="#9ddbd9"/>
<path d="M786 664V639H1259" fill="none" stroke="#cdf0ec" stroke-width="2"/><path d="M787 663H1258V640" fill="none" stroke="#4f8a80" stroke-width="2"/>
<text class="mr" x="1022" y="656" font-size="13" text-anchor="middle">Close</text>
</g>

<!-- ================ POPVIEW 3 ================ -->
<g>
<rect x="5" y="490" width="455" height="299" fill="#c8c8c8" stroke="#888"/>
<rect x="8" y="492" width="449" height="19" fill="url(#pg)"/>
<use href="#ti" x="10" y="494"/>
<text class="m" x="26" y="505" font-size="10.5" fill="#d8d8d8" letter-spacing=".9">Popview - 3</text>
<rect x="439" y="494" width="15" height="14" fill="#e0e0e0" stroke="#555"/><path d="M442 497 451 505M451 497 442 505" stroke="#000" stroke-width="1.5"/>
<rect x="8" y="511" width="449" height="276" fill="#2f7f6a"/>
<rect x="10" y="515" width="407" height="240" fill="#000"/>
<rect x="10" y="755" width="410" height="2" fill="#b8e8e2"/><rect x="417" y="513" width="3" height="244" fill="#b8e8e2"/>
<g clip-path="url(#cp3)">
<!-- blue traces -->
<g fill="none" stroke="#0818ff" stroke-width="10" stroke-linejoin="round">
<path d="M276 520 177 617H127L87 653V703"/>
<path d="M276 552 185 637H160L150 650V703"/>
<path d="M276 583 213 642V703"/>
<path d="M120 548H103L90 558H79" />
<path d="M40 515 57 533" stroke-width="14"/>
</g>
<g fill="none" stroke="#0818ff" stroke-width="16" stroke-linecap="round"><path d="M120 585H103"/><path d="M42 565V588"/><path d="M59 656V668"/><path d="M59 718V730"/><path d="M140 724 134 731"/></g>
<path d="M232 658H240L248 664V700L232 715Z" fill="#0818ff"/>
<path d="M10 742H110V755H10Z" fill="#0818ff"/><path d="M80 715 65 732H95L110 716Z M125 715 110 738V755H125L150 725Z M160 730 145 755H165L190 728Z" fill="#0818ff"/>
<rect x="80" y="515" width="32" height="4" fill="#0818ff"/>
<path d="M325 622H417V745H315L302 732V645Z" fill="#0818ff"/>
<!-- pads -->
<g fill="#44b0ff">
<rect x="120" y="515" width="62" height="9"/><rect x="120" y="537" width="62" height="22"/><rect x="120" y="573" width="62" height="23"/>
<rect x="276" y="515" width="62" height="9"/><rect x="276" y="537" width="62" height="22"/><rect x="276" y="573" width="62" height="23"/>
<rect x="32" y="515" width="20" height="8"/><rect x="58" y="515" width="21" height="8"/><rect x="32" y="546" width="20" height="20"/><rect x="58" y="546" width="21" height="20"/>
<rect x="49" y="667" width="21" height="20"/><rect x="77" y="667" width="20" height="20"/><rect x="113" y="667" width="20" height="20"/><rect x="140" y="667" width="21" height="20"/><rect x="177" y="667" width="20" height="20"/><rect x="204" y="667" width="20" height="20"/>
<rect x="49" y="698" width="21" height="20"/><rect x="77" y="698" width="20" height="20"/><rect x="113" y="698" width="20" height="20"/><rect x="140" y="698" width="21" height="20"/><rect x="177" y="698" width="20" height="20"/><rect x="204" y="698" width="20" height="20"/>
<rect x="311" y="682" width="91" height="59"/>
</g>
<!-- red -->
<path d="M114 515V605H345V515" fill="none" stroke="#ff0000" stroke-width="4.5"/>
<g stroke="#ff20ff" stroke-width="4.5"><path d="M176 605H192M214 605H233M243 605H260M114 515V517M114 536V560M114 578V592"/></g>
<path d="M22 518V530H34M72 530H89V518" fill="none" stroke="#ff0000" stroke-width="3.5"/>
<path d="M35 538H22V575H35M72 538H89V575H72" fill="none" stroke="#ff0000" stroke-width="3.5"/>
<g stroke="#ff0000" stroke-width="3.2" fill="none">
<path d="M40 657H105M40 657V725H105M105 657V725M40 692H66M80 692H131M145 692H193M207 692H232M105 657H168M105 725H168M168 657V725M168 657H233V725H168"/>
</g>
<g stroke="#ff20ff" stroke-width="3.2"><path d="M51 657H68M80 657H92M145 657H155M208 657H220M51 725H68M112 725H130M145 725H160M80 692H94"/></g>
<rect x="231" y="657" width="3" height="68" fill="#ff20ff"/>
<rect x="295" y="668" width="6" height="62" rx="3" fill="#ff0000"/>
<rect x="411" y="672" width="5" height="60" fill="#ff20ff"/>
<path d="M302 672Q352 652 412 672" fill="none" stroke="#ff20ff" stroke-width="6.5"/>
<!-- text -->
<g class="s" font-size="40" fill="#ff0000">
<text x="368" y="569">J</text><text x="397" y="569">8</text>
<text x="-9" y="565">8</text>
<text x="20" y="761">1</text>
<text x="60" y="761" fill="#ff20ff">4</text>
<text x="96" y="761">R</text>
<text x="125" y="761">1</text>
<text x="168" y="761">7</text>
<text x="194" y="761">R</text>
<text x="225" y="761">1</text>
<text x="261" y="761">8</text>
</g>
<text class="s" x="112" y="636" font-size="38" fill="url(#c4)">4</text>
<text class="s" x="336" y="636" font-size="38" fill="url(#c5)">5</text>
</g>
<rect x="419" y="512" width="38" height="247" fill="#000"/>
<g transform="translate(422,513)"><use href="#sb"/><use href="#iz" transform="scale(.87)"/></g>
<g transform="translate(422,548)"><use href="#sb"/><use href="#iu" transform="scale(.87)"/></g>
<g transform="translate(422,583)"><use href="#sb"/><use href="#id" transform="scale(.87)"/></g>
<g transform="translate(422,618)"><use href="#sb"/><use href="#il" transform="scale(.87)"/></g>
<g transform="translate(422,653)"><use href="#sb"/><use href="#ir" transform="scale(.87)"/></g>
<g transform="translate(422,688)"><use href="#sb"/><use href="#if" transform="scale(.87)"/></g>
<g transform="translate(422,723)"><use href="#sb"/><use href="#ip" transform="scale(.87)"/></g>
<rect x="9" y="760" width="447" height="25" fill="#9ddbd9"/>
<path d="M9 785V760H456" fill="none" stroke="#cdf0ec" stroke-width="2"/><path d="M10 784H455V761" fill="none" stroke="#4f8a80" stroke-width="2"/>
<text class="mr" x="231" y="777" font-size="13" text-anchor="middle">Close</text>
</g>

<!-- ================ RIGHT TOOLBAR ================ -->
<rect x="1281" y="76" width="159" height="409" fill="#000"/>
<rect x="1281" y="237" width="159" height="4" fill="#5a8a80"/>
<rect x="1281" y="76" width="1" height="409" fill="#4f8a80"/>
<rect x="1281" y="481" width="159" height="4" fill="#3f7a6a"/>
<!-- row 1 -->
<g transform="translate(1283,78)"><use href="#tb"/><use href="#iu"/></g>
<g transform="translate(1323,78)"><use href="#tb"/><use href="#id"/></g>
<g transform="translate(1363,78)"><use href="#tb"/><path d="M9 18 19 9 29 18M11 17V29H27V17M16 29V21H22V29M25 12V7" fill="none" stroke="#000" stroke-width="1.6"/></g>
<g transform="translate(1403,78)"><use href="#tb"/><rect x="8" y="9" width="23" height="21" fill="none" stroke="#000" stroke-width="2.5"/><path d="M8 22H31M19 9V30" stroke="#000" stroke-width="1.5"/></g>
<!-- row 2 -->
<g transform="translate(1283,118)"><use href="#tb"/><use href="#il"/></g>
<g transform="translate(1323,118)"><use href="#tb"/><use href="#ir"/></g>
<g transform="translate(1363,118)"><use href="#tb"/><rect x="18" y="13" width="13" height="13" fill="none" stroke="#000" stroke-width="2"/><path d="M8 13 H12Q16 13 16 19 16 25 11 25" fill="none" stroke="#000" stroke-width="2.5"/><path d="M7 13 11 10V16Z"/></g>
<g transform="translate(1403,118)"><use href="#tb"/><path d="M29 12H11V20H27V28H9" fill="none" stroke="#000" stroke-width="2"/></g>
<!-- row 3 -->
<g transform="translate(1283,158)"><use href="#tb"/><use href="#if"/></g>
<g transform="translate(1323,158)"><use href="#tb"/><use href="#ip"/></g>
<g transform="translate(1363,158)"><use href="#tb"/><text class="m" x="19" y="24" font-size="14" text-anchor="middle" fill="#0a2a20" letter-spacing="-1">1:2</text></g>
<g transform="translate(1403,158)"><use href="#tb"/><rect x="9" y="9" width="20" height="20" fill="none" stroke="#000" stroke-width="2"/><text class="m" x="19" y="25" font-size="15" text-anchor="middle" fill="#0a2a20">?</text></g>
<!-- row 4 -->
<g transform="translate(1283,198)"><use href="#tb"/><path d="M8 9H26M7 18 25 17" stroke="#000" stroke-width="2"/><circle cx="28" cy="9" r="3" fill="none" stroke="#000" stroke-width="2"/><ellipse cx="22" cy="25" rx="7" ry="5" fill="none" stroke="#000"/></g>
<g transform="translate(1323,198)"><use href="#tb"/><path d="M13 7V31M25 7V31M7 13H31M7 25H31" stroke="#80b0b0" stroke-width=".8"/><circle cx="16" cy="18" r="5" fill="#000" stroke="#c02020" stroke-width="1.5"/><rect x="20" y="16" width="10" height="4" fill="#801818"/></g>
<g transform="translate(1363,198)"><use href="#tb"/><rect x="3" y="3" width="32" height="32" fill="#9ddbd9" stroke="#b01010" stroke-width="2.5"/><rect x="21" y="6" width="10" height="26" fill="#9ddbd9" stroke="#000"/><circle cx="26" cy="12" r="3.5" fill="#f00"/><circle cx="26" cy="19" r="2.5" fill="none" stroke="#000"/><circle cx="26" cy="26" r="2.5" fill="none" stroke="#000"/><path d="M13 9V20H7M7 20V28M13 20V28H9" stroke="#0818ff" fill="none"/><circle cx="14" cy="9" r="2.5" fill="#0818ff"/><circle cx="7" cy="20" r="2.5" fill="#f00"/><circle cx="9" cy="29" r="2.5" fill="#0818ff"/></g>
<g transform="translate(1403,198)"><use href="#tb"/><rect x="3" y="3" width="32" height="32" fill="#9ddbd9" stroke="#b01010" stroke-width="2.5"/><rect x="21" y="6" width="10" height="26" fill="#9ddbd9" stroke="#000"/><circle cx="26" cy="12" r="3.5" fill="#f00"/><circle cx="26" cy="19" r="2.5" fill="none" stroke="#000"/><circle cx="26" cy="26" r="2.5" fill="none" stroke="#000"/><path d="M14 9V20H7M10 28H14V20" stroke="#000" fill="none"/><circle cx="14" cy="9" r="2.5"/><circle cx="7" cy="20" r="2.5"/><circle cx="10" cy="29" r="2.5"/><path d="M15 17H19V21H15Z" fill="#e03030"/></g>
<!-- row 5 white -->
<g transform="translate(1283,243)"><use href="#wb"/><rect x="4" y="4" width="30" height="28" fill="#000"/><rect x="10" y="12" width="15" height="15" fill="none" stroke="#fff"/><circle cx="17" cy="19" r="6" fill="#fff"/><path d="M23 13 30 6M25 6H30V11" stroke="#fff" stroke-width="2" fill="none"/></g>
<g transform="translate(1323,243)"><use href="#wb"/><path d="M10 28 20 7M12 31 31 24" stroke="#000"/><rect x="19" y="8" width="11" height="12" fill="#fff" stroke="#c01010" stroke-width="2"/><rect x="6" y="25" width="7" height="7" fill="#fff" stroke="#1010c0" stroke-width="2"/></g>
<g transform="translate(1363,243)"><use href="#wb"/><path d="M8 22H30V17H28V19H26V17H24V19H22V17H20V19H18V17H16V19H14V17H12V19H10V17H8Z"/></g>
<g transform="translate(1403,243)"><use href="#wb"/><rect x="8" y="8" width="22" height="22" fill="none" stroke="#000" stroke-dasharray="2 2"/><circle cx="19" cy="19" r="7"/></g>
<!-- row 6 gray -->
<g transform="translate(1283,282)"><use href="#gb"/><path d="M11 12V28H27" fill="none" stroke="#0818ff" stroke-width="3"/><circle cx="12" cy="11" r="4.5" fill="#0818ff"/><circle cx="12" cy="28" r="4.5" fill="#0818ff"/><circle cx="27" cy="28" r="4.5" fill="#0818ff"/><circle cx="27" cy="11" r="4.5" fill="#f00"/></g>
<g transform="translate(1323,282)"><use href="#gb"/><path d="M11 10 28 27M28 10 11 27" stroke="#000" stroke-width="2"/><circle cx="19" cy="19" r="4" fill="#1018a0"/></g>
<g transform="translate(1363,282)"><use href="#gb"/><circle cx="12" cy="27" r="3.5" fill="none" stroke="#0818ff" stroke-width="2"/><circle cx="27" cy="11" r="4.5" fill="#f00"/><path d="M15 24 22 16M18 16H22V20" fill="none" stroke="#000"/></g>
<g transform="translate(1403,282)"><use href="#gb"/><circle cx="12" cy="27" r="4.5" fill="#0818ff"/><circle cx="27" cy="11" r="4.5" fill="#f00"/><path d="M15 24 22 16M18 16H22V20" fill="none" stroke="#000"/></g>
<!-- row 7 -->
<g transform="translate(1283,322)"><use href="#gb"/><path d="M9 25 26 8" stroke="#e01010" stroke-width="3"/><rect x="9" y="26" width="21" height="3" fill="#0818ff"/><path d="M21 24 25 20M22 20H25V23" stroke="#000" fill="none"/></g>
<g transform="translate(1323,322)"><use href="#gb"/><path d="M9 26 18 17" stroke="#0818ff" stroke-width="3"/><path d="M18 17 28 7" stroke="#e01010" stroke-width="3"/><path d="M22 26 26 22M23 22H26V25" stroke="#000" fill="none"/></g>
<g transform="translate(1363,322)"><use href="#gb"/><path d="M17 11Q26 11 26 18 26 26 16 27" fill="none" stroke="#000" stroke-width="2"/><path d="M11 27 17 23V31Z"/></g>
<g transform="translate(1403,322)"><use href="#gb"/><path d="M6 10H15V26M6 17H13" fill="none" stroke="#0818ff" stroke-width="3"/><path d="M19 6V32" stroke="#000"/><path d="M23 10H32M23 10V28M23 17H30" fill="none" stroke="#e01010" stroke-width="3"/></g>
<!-- row 8 -->
<g transform="translate(1283,362)"><use href="#gb"/><rect x="6" y="20" width="11" height="11" fill="none" stroke="#0818ff"/><circle cx="11.5" cy="25.5" r="3.5" fill="#0818ff"/><rect x="21" y="6" width="12" height="12" fill="#f00"/><circle cx="27" cy="12" r="3.5" fill="#ddd"/><path d="M17 18 21 15" stroke="#000"/></g>
<g transform="translate(1323,362)"><use href="#gb"/><rect x="9" y="17" width="21" height="4" fill="#f01010"/><rect x="15" y="17" width="8" height="4" fill="#0818ff"/></g>
<g transform="translate(1363,362)"><use href="#gb"/><path d="M7 8V30M31 8V30" stroke="#000"/><path d="M9 19H29" stroke="#0818ff"/><rect x="15" y="13" width="9" height="12" fill="#d8d8d8" stroke="#0818ff"/><text class="s" x="19.5" y="23" font-size="8" text-anchor="middle" fill="#0818ff">4</text></g>
<g transform="translate(1403,362)"><use href="#gb"/><path d="M9 9H17V17H29V29H15V20H9Z" fill="#0818ff"/><circle cx="14" cy="14" r="4" fill="#d8d8d8"/><circle cx="23" cy="23" r="4.5" fill="#d8d8d8"/></g>
<!-- row 9 -->
<g transform="translate(1283,402)"><use href="#gb"/><path d="M9 25 19 12 29 25" fill="none" stroke="#e01010" stroke-width="3"/><rect x="9" y="25" width="21" height="3" fill="#0818ff"/><path d="M19 18V24M17 20 19 18 21 20" stroke="#000" fill="none"/></g>
<g transform="translate(1323,402)"><use href="#gb"/><path d="M8 31 19 5 30 31" fill="none" stroke="#e01010" stroke-width="2.5"/><path d="M10 31 19 21 28 31" fill="none" stroke="#0818ff" stroke-width="3"/><path d="M19 12V17" stroke="#000"/></g>
<g transform="translate(1363,402)"><use href="#gb"/><path d="M10 25 15 9H23L28 25" fill="none" stroke="#e01010" stroke-width="3"/><path d="M7 30 9 25H29L31 30" fill="none" stroke="#0818ff" stroke-width="3"/><path d="M19 13V20M17 15 19 13 21 15" stroke="#000" fill="none"/></g>
<g transform="translate(1403,402)"><use href="#gb"/><path d="M10 25 15 9H23L28 25" fill="none" stroke="#e01010" stroke-width="3"/><rect x="5" y="23" width="28" height="3" fill="#0818ff"/><path d="M19 13V20M17 15 19 13 21 15M6 21 12 28M12 21 6 28M26 21 32 28M32 21 26 28" stroke="#000" fill="none"/></g>
<!-- row 10 yellow -->
<g transform="translate(1283,442)"><use href="#yb"/><path d="M13 9 13 22 17 19 21 29 24 27 20 18H25Z"/></g>
<g transform="translate(1323,442)"><use href="#yb"/><rect x="8" y="7" width="23" height="24" fill="none" stroke="#e03010" stroke-width="2.5"/><path d="M15 11 15 24 19 21 23 31 26 29 22 20H27Z"/></g>
<g transform="translate(1363,442)"><use href="#yb"/><path d="M14 7H29V31H14L8 25V13Z" fill="none" stroke="#e03010" stroke-width="2.5"/><path d="M16 11 16 24 20 21 24 31 27 29 23 20H28Z"/></g>
<g transform="translate(1403,442)"><use href="#yb"/><path d="M10 7V23M10 30H15V16H22V12H28" fill="none" stroke="#000"/><circle cx="10" cy="23" r="2.5" fill="#e01010"/><circle cx="8" cy="29" r="2.5" fill="#20d040"/><circle cx="28" cy="11" r="2.5" fill="#20d040"/><path d="M20 18 20 30 24 27 27 34 30 32 26 25H31Z"/></g>

<!-- minimap -->
<rect x="1281" y="485" width="159" height="265" fill="#000"/>
<rect x="1281" y="485" width="1.5" height="265" fill="#4f8a80"/>
<rect x="1282.5" y="578.5" width="160" height="78" fill="none" stroke="#3f9010"/>
<rect x="1290" y="580" width="65" height="42" fill="#f00"/>
<path d="M1292 619V584H1293" stroke="#c0c0c0" stroke-width="2.5" fill="none"/>
<rect x="1293" y="583.5" width="31" height="34" fill="none" stroke="#40d8e0" stroke-width="2"/>
<path d="M1290 615 1297 622M1297 615 1290 622" stroke="#d0e0e0"/>
<!-- coords -->
<rect x="1281" y="750" width="159" height="45" fill="#56c9aa"/>
<rect x="1281" y="750" width="159" height="2" fill="#a0e8d4"/>
<text class="mr" x="1285" y="770" font-size="13" letter-spacing="1.1">X = 2.802150"</text>
<text class="mr" x="1285" y="785" font-size="13" letter-spacing="1.1">Y = 2.372876"</text>

<!-- ================ BOTTOM ================ -->
<rect x="5" y="797" width="1435" height="33" fill="#ffffd0"/>
<rect x="5" y="830" width="1435" height="2" fill="#000"/>
<g transform="translate(6,799)"><rect width="28" height="28" fill="#e8e8c0" stroke="#000"/><rect x="4.5" y="4.5" width="19" height="19" fill="none" stroke="#000" stroke-width="1.5"/><path d="M8 8 20 20M8 8H13M8 8V13M20 20H15M20 20V15" stroke="#000" fill="none"/></g>
<g transform="translate(37,799)"><rect width="28" height="28" fill="#e8e8c0" stroke="#000"/><rect x="4.5" y="4.5" width="19" height="19" fill="none" stroke="#000" stroke-width="1.5"/><path d="M7 20H21M9 20 17 8" stroke="#000" fill="none"/><text class="m" x="17" y="20" font-size="7">oo</text></g>
<g transform="translate(66,798)"><rect width="27" height="30" fill="#4fa088"/><rect x="3" y="3" width="21" height="24" fill="#e8e8c0"/><path d="M8 9H20V22H8Z M8 15H20M14 9V22" fill="none" stroke="#000"/></g>
<text class="m" x="102" y="816" font-size="12" fill="#0a2a20">X Y :</text>
<rect x="149" y="798" width="170" height="28" fill="#ffffd0" stroke="#000"/>
<rect x="151.5" y="800.5" width="165" height="23" fill="#ffffd8" stroke="#a8a880" stroke-width="2"/>
<path d="M156 803V818" stroke="#000" stroke-dasharray="1 1"/>
<g transform="translate(322,798)"><rect width="28" height="30" fill="#4fa088"/><rect x="3" y="3" width="22" height="24" fill="#e8e8c0"/><rect x="7.5" y="7.5" width="13" height="15" fill="none" stroke="#000"/><path d="M14 10V18M14 20V21" stroke="#000" stroke-width="1.5"/></g>
<rect x="351" y="797" width="2" height="33" fill="#4f8a80"/>
<text class="m" x="356" y="816" font-size="11.8" fill="#0a2a20">&lt;M1&gt; - Select first corner</text>
<rect x="1364" y="797" width="76" height="33" fill="#2f6f5c"/>
<rect x="1367" y="799" width="73" height="29" fill="#9ddbd9"/>
<path d="M1367 828V799H1440" fill="none" stroke="#cdf0ec" stroke-width="1.5"/><path d="M1367 827H1440" stroke="#4f8a80" stroke-width="1.5"/>
<text class="mr" x="1377" y="817" font-size="14.5">Inch</text>
<rect x="1421" y="810" width="12" height="6" fill="#9ddbd9" stroke="#4f8a80"/>
<rect x="5" y="832" width="1435" height="2" fill="#4f8a80"/>
<rect x="6" y="834" width="1434" height="24" fill="#b0ffff"/>
<path d="M6 858H1440" stroke="#4f8a80" stroke-width="1.5"/><path d="M6 858V834" stroke="#4f8a80"/>
<text class="m" x="483" y="849" font-size="11.4" fill="#0a2a20" textLength="483">ss,#30,Line,XS=2.12102,YS=0.5723,XE=2.12102,YE=1.2123,r16,POS,Ang=-90</text>
<rect x="0" y="859" width="1440" height="6" fill="#d4d0c8"/><rect x="0" y="863" width="1440" height="2" fill="#666"/>
</svg>
</body></html>
